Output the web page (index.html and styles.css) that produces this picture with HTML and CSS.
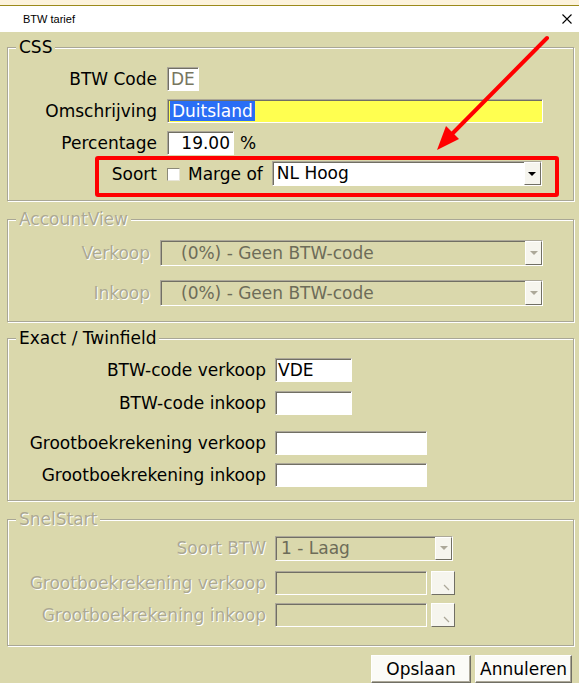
FILE: index.html
```html
<!DOCTYPE html>
<html lang="nl">
<head>
    <meta charset="UTF-8">
    <title>BTW tarief</title>
    <link rel="stylesheet" href="styles.css">
</head>
<body>
    <div class="topstrip"></div>
    <div class="titlebar">
        <span class="title">BTW tarief</span>
        <svg class="close" width="10" height="10" viewBox="0 0 10 10">
            <path d="M0.5 0.5 L9.5 9.5 M9.5 0.5 L0.5 9.5" stroke="#000" stroke-width="1.1" fill="none"/>
        </svg>
    </div>

    <div class="dialog">
        <fieldset class="group group-css">
            <legend>CSS</legend>
            <div class="row">
                <span class="label">BTW Code</span>
                <div class="field field-code readonly">DE</div>
            </div>
            <div class="row">
                <span class="label">Omschrijving</span>
                <div class="field field-desc"><span class="selected">Duitsland</span></div>
            </div>
            <div class="row row-tight">
                <span class="label">Percentage</span>
                <div class="field field-pct">19.00</div>
                <span class="unit">%</span>
            </div>
            <div class="row row-soort">
                <span class="label">Soort</span>
                <span class="check"></span>
                <span class="check-label">Marge of</span>
                <div class="select select-soort">
                    <span class="select-text">NL Hoog</span>
                    <span class="drop"><i class="tri"></i></span>
                </div>
            </div>
        </fieldset>

        <fieldset class="group group-av">
            <legend class="disabled">AccountView</legend>
            <div class="row row-av">
                <span class="label disabled">Verkoop</span>
                <div class="select select-av off">
                    <span class="select-text">(0%) - Geen BTW-code</span>
                    <span class="drop"><i class="tri"></i></span>
                </div>
            </div>
            <div class="row row-av">
                <span class="label disabled">Inkoop</span>
                <div class="select select-av off">
                    <span class="select-text">(0%) - Geen BTW-code</span>
                    <span class="drop"><i class="tri"></i></span>
                </div>
            </div>
        </fieldset>

        <fieldset class="group group-exact">
            <legend>Exact / Twinfield</legend>
            <div class="row row-g9">
                <span class="label">BTW-code verkoop</span>
                <div class="field field-short">VDE</div>
            </div>
            <div class="row row-g16">
                <span class="label">BTW-code inkoop</span>
                <div class="field field-short"></div>
            </div>
            <div class="row">
                <span class="label">Grootboekrekening verkoop</span>
                <div class="field field-long"></div>
            </div>
            <div class="row">
                <span class="label">Grootboekrekening inkoop</span>
                <div class="field field-long"></div>
            </div>
        </fieldset>

        <fieldset class="group group-snel">
            <legend class="disabled">SnelStart</legend>
            <div class="row row-g10">
                <span class="label disabled">Soort BTW</span>
                <div class="select select-snel off">
                    <span class="select-text">1 - Laag</span>
                    <span class="drop"><i class="tri"></i></span>
                </div>
            </div>
            <div class="row">
                <span class="label disabled">Grootboekrekening verkoop</span>
                <div class="field field-snel off"></div>
                <span class="browse">
                    <svg width="8" height="8" viewBox="0 0 8 8"><path d="M1 2 L6 7" stroke="#aca899" stroke-width="1.2"/></svg>
                </span>
            </div>
            <div class="row">
                <span class="label disabled">Grootboekrekening inkoop</span>
                <div class="field field-snel off"></div>
                <span class="browse">
                    <svg width="8" height="8" viewBox="0 0 8 8"><path d="M1 2 L6 7" stroke="#aca899" stroke-width="1.2"/></svg>
                </span>
            </div>
        </fieldset>

        <div class="buttons">
            <button class="btn btn-save">Opslaan</button>
            <button class="btn btn-cancel">Annuleren</button>
        </div>
    </div>

    <!-- annotatie-pijl -->
    <svg class="arrow" width="579" height="683" viewBox="0 0 579 683">
        <line x1="547" y1="38" x2="449" y2="137" stroke="#ff0000" stroke-width="4" stroke-linecap="round"/>
        <polygon points="437,150 459,139 446,126" fill="#ff0000"/>
    </svg>
</body>
</html>
```

FILE: styles.css
```css
html, body {
    margin: 0;
    padding: 0;
    overflow: hidden;
}
body {
    width: 579px;
    height: 683px;
    background-color: #dad8ac;
    font-family: "DejaVu Sans", Verdana, sans-serif;
    font-size: 17px;
    color: #000;
    position: relative;
}
.topstrip {
    height: 5px;
    background-color: #fdf3dc;
    border-bottom: 1px solid #9c8a1a;
}
.titlebar {
    height: 26px;
    background-color: #fff;
    display: flex;
    align-items: center;
    justify-content: space-between;
    padding: 0 7px 0 23px;
}
.title {
    font-family: "Liberation Sans", Arial, sans-serif;
    font-size: 11px;
}
.close {
    display: block;
}

/* groepen */
.group {
    margin: 0 5px 0 7px;
    padding: 0;
    min-width: 0;
    border: 1px solid #a9a796;
    box-shadow: inset 1px 1px 0 #fff, 1px 1px 0 #fff;
}
.group legend {
    margin-left: 8px;
    padding: 0 3px;
    line-height: 20px;
    background-color: #dad8ac;
}
.group-css {
    margin-top: 5px;
    padding: 10px 0 3px 0;
}
.group-av {
    margin-top: 8px;
    padding: 11px 0 15px 0;
}
.group-exact {
    margin-top: 6px;
    padding: 10px 0 13px 0;
}
.group-snel {
    margin-top: 8px;
    padding: 7px 0 18px 0;
}
.disabled {
    color: #aca993;
    text-shadow: 1px 1px 0 #fff;
}

/* rijen */
.row {
    display: flex;
    align-items: center;
    height: 24px;
    margin-bottom: 8px;
}
.row:last-child {
    margin-bottom: 0;
}
.row-tight {
    margin-bottom: 1px;
}
.row-g9 {
    margin-bottom: 9px;
}
.row-g10 {
    margin-bottom: 11px;
}
.row-g16 {
    margin-bottom: 16px;
}
.row-av {
    height: 26px;
    margin-bottom: 14px;
}
.label {
    flex: none;
    text-align: right;
    white-space: nowrap;
}
.group-css .label {
    width: 149px;
    margin-right: 10px;
}
.group-av .label {
    width: 142px;
    margin-right: 10px;
}
.group-exact .label,
.group-snel .label {
    width: 258px;
    margin-right: 9px;
}

/* invoervelden */
.field {
    box-sizing: border-box;
    height: 24px;
    background-color: #fff;
    border: 1px solid;
    border-color: #aca899 #fff #fff #aca899;
    box-shadow: inset 1px 1px 0 #716f64;
    padding: 0 3px;
    line-height: 22px;
    white-space: nowrap;
}
.field.readonly {
    color: #77765f;
}
.field.off {
    background-color: #dad8ac;
}
.field-code {
    width: 32px;
}
.field-desc {
    width: 376px;
    background-color: #ffff50;
    padding-left: 2px;
}
.selected {
    background-color: #2a6ef5;
    color: #fff;
    padding: 0 2px 0 2px;
    display: inline-block;
    line-height: 20px;
}
.field-pct {
    width: 67px;
    text-align: right;
}
.unit {
    margin-left: 6px;
}
.field-short {
    width: 77px;
    padding-left: 2px;
}
.field-long {
    width: 152px;
}
.field-snel {
    width: 152px;
}
.browse {
    box-sizing: border-box;
    width: 24px;
    height: 24px;
    margin-left: 4px;
    background-color: #f6f5ee;
    border: 1px solid;
    border-color: #fff #716f64 #716f64 #fff;
    display: flex;
    align-items: flex-end;
    justify-content: flex-end;
    padding: 0 3px 3px 0;
}

/* soort-rij met rode markering */
.row-soort {
    box-sizing: border-box;
    height: 41px;
    width: 464px;
    margin-left: 87px;
    border: 4px solid #ff0000;
    border-radius: 3px;
    padding: 1px 0 0 0;
    align-items: flex-start;
}
.row-soort .label {
    width: 58px;
    line-height: 27px;
}
.check {
    box-sizing: border-box;
    width: 13px;
    height: 13px;
    margin-top: 7px;
    background-color: #fff;
    border: 1px solid;
    border-color: #8c8a78 #e8e6d8 #e8e6d8 #8c8a78;
    flex: none;
}
.check-label {
    margin-left: 8px;
    margin-right: 9px;
    line-height: 27px;
    white-space: nowrap;
}

/* keuzelijsten */
.select {
    box-sizing: border-box;
    height: 25px;
    display: flex;
    align-items: stretch;
    background-color: #fff;
    border: 1px solid;
    border-color: #aca899 #fff #fff #aca899;
    box-shadow: inset 1px 0 0 #716f64, inset 0 1px 0 #716f64;
}
.select-text {
    flex: 1;
    line-height: 23px;
    white-space: nowrap;
    overflow: hidden;
}
.select-soort {
    width: 270px;
}
.select-soort .select-text {
    padding-left: 4px;
}
.select-av {
    width: 383px;
    height: 26px;
}
.select-av .select-text {
    padding-left: 20px;
    line-height: 24px;
}
.select-snel {
    width: 178px;
}
.select-snel .select-text {
    padding-left: 5px;
}
.select.off {
    background-color: #dad8ac;
    color: #6d6c58;
}
.drop {
    box-sizing: border-box;
    width: 17px;
    flex: none;
    background-color: #f6f5ee;
    border: 1px solid;
    border-color: #fff #716f64 #716f64 #fff;
    display: flex;
    align-items: center;
    justify-content: center;
}
.tri {
    width: 0;
    height: 0;
    border-left: 4px solid transparent;
    border-right: 4px solid transparent;
    border-top: 4px solid #000;
}
.select.off .tri {
    border-top-color: #aca899;
}

/* knoppen */
.buttons {
    display: flex;
    justify-content: flex-end;
    gap: 4px;
    margin-top: 9px;
    padding-right: 7px;
}
.btn {
    box-sizing: border-box;
    height: 28px;
    padding: 0;
    font-family: "DejaVu Sans", Verdana, sans-serif;
    font-size: 17px;
    color: #000;
    background-color: #fbfbf7;
    border: 1px solid;
    border-color: #fff #716f64 #716f64 #fff;
    box-shadow: inset -1px -1px 0 #aca899;
}
.btn-save {
    width: 100px;
}
.btn-cancel {
    width: 97px;
}

.arrow {
    position: absolute;
    left: 0;
    top: 0;
    pointer-events: none;
}
```
